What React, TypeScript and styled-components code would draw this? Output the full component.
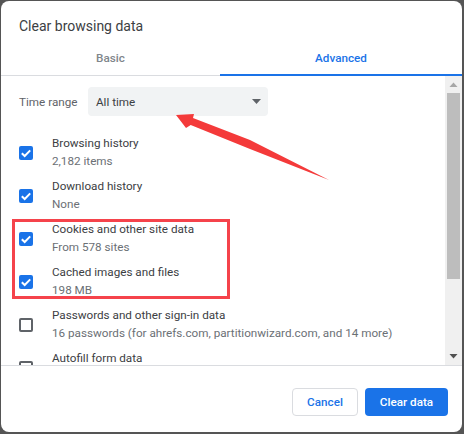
import React from "react";
import styled, { createGlobalStyle } from "styled-components";

const Global = createGlobalStyle`
  html, body { margin: 0; padding: 0; background: #555; }
  * { box-sizing: border-box; }
`;

const Page = styled.div`
  position: relative;
  width: 464px;
  height: 434px;
  padding: 1px 2px 2px 1px;
  background: #555;
  font-family: Roboto, "Liberation Sans", sans-serif;
`;

const Dialog = styled.div`
  width: 461px;
  height: 431px;
  display: flex;
  flex-direction: column;
  background: #fff;
  border-radius: 8px;
  overflow: hidden;
`;

const Title = styled.div`
  height: 40px;
  padding: 16px 0 0 18px;
  font-size: 14px;
  line-height: 18px;
  color: #3c4043;
`;

const Tabs = styled.div`
  height: 35px;
  display: grid;
  grid-template-columns: 219px 242px;
  border-bottom: 1px solid #dadce0;
`;

const Tab = styled.div<{ $active?: boolean }>`
  height: 35px;
  padding-top: 9px;
  text-align: center;
  font-size: 11.7px;
  line-height: 16px;
  font-weight: 500;
  color: ${(p) => (p.$active ? "#1a73e8" : "#80868b")};
  border-bottom: ${(p) => (p.$active ? "2px solid #1a73e8" : "none")};
`;

const Middle = styled.div`
  height: 290px;
  display: flex;
  border-bottom: 1px solid #dadce0;
`;

const Scroller = styled.div`
  flex: 1;
  height: 289px;
  overflow: hidden;
  padding: 11px 0 0 18px;
`;

const RangeRow = styled.div`
  display: flex;
  align-items: center;
  margin-bottom: 15px;
`;

const RangeLabel = styled.div`
  width: 69px;
  font-size: 11.7px;
  color: #5f6368;
`;

const Select = styled.div`
  width: 180px;
  height: 29px;
  padding: 0 8px;
  display: flex;
  align-items: center;
  justify-content: space-between;
  background: #f1f3f4;
  border-radius: 4px;
  font-size: 11.7px;
  color: #3c4043;
`;

const Caret = styled.svg`
  width: 9px;
  height: 5px;
  margin-right: -1px;
`;

const Row = styled.div`
  height: 43px;
  display: flex;
  align-items: center;
`;

const Box = styled.div<{ $checked: boolean }>`
  width: 14px;
  height: 14px;
  margin-right: 19px;
  flex: none;
  border-radius: 2px;
  background: ${(p) => (p.$checked ? "#1a73e8" : "#fff")};
  border: ${(p) => (p.$checked ? "none" : "2px solid #5f6368")};
`;

const Check = styled.svg`
  display: block;
  width: 14px;
  height: 14px;
`;

const Texts = styled.div`
  display: flex;
  flex-direction: column;
  gap: 3px;
  white-space: nowrap;
`;

const Main = styled.div`
  font-size: 11.7px;
  line-height: 15px;
  color: #3c4043;
`;

const Sub = styled.div`
  min-height: 15px;
  font-size: 11.7px;
  line-height: 15px;
  color: #6b7075;
`;

const Scrollbar = styled.div`
  width: 17px;
  height: 289px;
  padding: 0 1px;
  display: flex;
  flex-direction: column;
  align-items: center;
  background: #f0f0f0;
`;

const ArrowBtn = styled.svg`
  width: 17px;
  height: 17px;
  flex: none;
`;

const Thumb = styled.div`
  width: 13px;
  height: 186px;
  background: #bdbdbd;
`;

const Spacer = styled.div`
  flex: 1;
`;

const Footer = styled.div`
  flex: 1;
  display: flex;
  justify-content: flex-end;
  align-items: flex-start;
  gap: 7px;
  padding: 22px 14px 0 0;
`;

const Button = styled.div<{ $primary?: boolean }>`
  height: 28px;
  width: ${(p) => (p.$primary ? "83px" : "66px")};
  display: flex;
  align-items: center;
  justify-content: center;
  border-radius: 4px;
  font-size: 11.7px;
  font-weight: 500;
  color: ${(p) => (p.$primary ? "#fff" : "#1a73e8")};
  background: ${(p) => (p.$primary ? "#1a73e8" : "#fff")};
  border: ${(p) => (p.$primary ? "none" : "1px solid #dadce0")};
`;

const Highlight = styled.div`
  position: absolute;
  left: 12px;
  top: 219px;
  width: 218px;
  height: 80px;
  border: 3px solid #f5434b;
`;

const Annotation = styled.svg`
  position: absolute;
  left: 0;
  top: 0;
  width: 464px;
  height: 434px;
  pointer-events: none;
`;

const items = [
  { main: "Browsing history", sub: "2,182 items", on: true },
  { main: "Download history", sub: "None", on: true },
  { main: "Cookies and other site data", sub: "From 578 sites", on: true },
  { main: "Cached images and files", sub: "198 MB", on: true },
  {
    main: "Passwords and other sign-in data",
    sub: "16 passwords (for ahrefs.com, partitionwizard.com, and 14 more)",
    on: false,
  },
  { main: "Autofill form data", sub: "", on: false },
];

export default function App() {
  return (
    <Page>
      <Global />
      <Dialog>
        <Title>Clear browsing data</Title>
        <Tabs>
          <Tab>Basic</Tab>
          <Tab $active>Advanced</Tab>
        </Tabs>
        <Middle>
          <Scroller>
            <RangeRow>
              <RangeLabel>Time range</RangeLabel>
              <Select>
                All time
                <Caret viewBox="0 0 9 5">
                  <path d="M0 0h9L4.5 5z" fill="#5f6368" />
                </Caret>
              </Select>
            </RangeRow>
            {items.map((it) => (
              <Row key={it.main}>
                <Box $checked={it.on}>
                  {it.on && (
                    <Check viewBox="0 0 14 14">
                      <path d="M2.8 7.2l2.9 2.8L11.2 4.4" fill="none" stroke="#fff" strokeWidth="2" />
                    </Check>
                  )}
                </Box>
                <Texts>
                  <Main>{it.main}</Main>
                  <Sub>{it.sub}</Sub>
                </Texts>
              </Row>
            ))}
          </Scroller>
          <Scrollbar>
            <ArrowBtn viewBox="0 0 17 17">
              <path d="M4.5 11h8l-4-4.5z" fill="#a6a6a6" />
            </ArrowBtn>
            <Thumb />
            <Spacer />
            <ArrowBtn viewBox="0 0 17 17">
              <path d="M4.5 6h8l-4 4.5z" fill="#505050" />
            </ArrowBtn>
          </Scrollbar>
        </Middle>
        <Footer>
          <Button>Cancel</Button>
          <Button $primary>Clear data</Button>
        </Footer>
      </Dialog>
      <Highlight />
      <Annotation viewBox="0 0 464 434">
        <path d="M176 115L194 114L193 118L250 140L329 180L250 149L190.7 125L186 128Z" fill="#f43a3a" />
      </Annotation>
    </Page>
  );
}
